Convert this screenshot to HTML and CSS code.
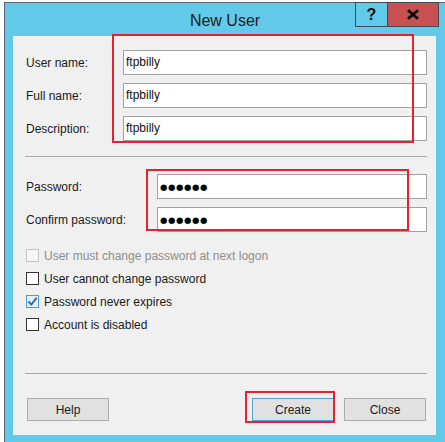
FILE: index.html
```html
<!DOCTYPE html>
<html>
<head>
<meta charset="utf-8">
<title>New User</title>
<link rel="stylesheet" href="styles.css">
</head>
<body>
<div class="window">
  <div class="titlebar">
    <span class="title">New User</span>
    <div class="caption">
      <div class="cap-btn cap-help">?</div>
      <div class="cap-btn cap-close">
        <svg width="14" height="11" viewBox="0 0 14 11"><path d="M2 1.2 L12 9.8 M12 1.2 L2 9.8" stroke="#000" stroke-width="2.8" fill="none"/></svg>
      </div>
    </div>
  </div>
  <div class="client">
    <div class="grid grid-top">
      <label class="lbl">User name:</label><div class="field">ftpbilly</div>
      <label class="lbl">Full name:</label><div class="field">ftpbilly</div>
      <label class="lbl">Description:</label><div class="field">ftpbilly</div>
    </div>
    <div class="sep sep-top"></div>
    <div class="grid grid-pw">
      <label class="lbl">Password:</label><div class="field"><span class="dots">●●●●●●</span></div>
      <label class="lbl">Confirm password:</label><div class="field"><span class="dots">●●●●●●</span></div>
    </div>
    <div class="checks">
      <div class="check disabled"><span class="box"></span><span>User must change password at next logon</span></div>
      <div class="check"><span class="box"></span><span>User cannot change password</span></div>
      <div class="check"><span class="box checked"><svg width="11" height="11" viewBox="0 0 11 11"><path d="M1.5 5.5 L4.3 8.5 L9.6 1.8" stroke="#2a6fb2" stroke-width="2" fill="none"/></svg></span><span>Password never expires</span></div>
      <div class="check"><span class="box"></span><span>Account is disabled</span></div>
    </div>
    <div class="sep sep-bottom"></div>
    <div class="buttons">
      <button class="btn btn-help">Help</button>
      <button class="btn btn-default">Create</button>
      <button class="btn">Close</button>
    </div>
  </div>
</div>
<div class="mark mark-names"></div>
<div class="mark mark-pw"></div>
<div class="mark mark-create"></div>
</body>
</html>
```

FILE: styles.css
```css
html, body {
  margin: 0;
  padding: 0;
}
body {
  background: #ffffff;
  width: 445px;
  height: 442px;
  overflow: hidden;
  position: relative;
  font-family: "Liberation Sans", Arial, sans-serif;
  font-size: 12px;
  color: #1a1a1a;
}
.window {
  margin: 2px 0 0 4px;
  width: 441px;
  height: 440px;
  box-sizing: border-box;
  border-top: 1px solid #5b6770;
  border-left: 1px solid #5b6770;
  background: #62c9e8;
  position: relative;
}
.titlebar {
  height: 33px;
  box-sizing: border-box;
  padding-top: 2px;
  line-height: 31px;
  text-align: center;
}
.title {
  font-size: 16px;
  color: #1b1b1b;
}
.caption {
  position: absolute;
  top: -1px;
  right: 6px;
  display: flex;
  height: 25px;
}
.cap-btn {
  box-sizing: border-box;
  height: 25px;
  border: 1px solid #3d4c57;
  display: flex;
  align-items: center;
  justify-content: center;
}
.cap-help {
  width: 32px;
  border-right: none;
  background: #62c9e8;
  font-weight: bold;
  font-size: 16px;
  color: #111;
  padding-bottom: 1px;
}
.cap-close {
  width: 52px;
  background: #c75050;
}
.client {
  margin-left: 8px;
  width: 423px;
  height: 399px;
  box-sizing: border-box;
  background: #f0f0f0;
  padding: 14px 9px 0 12px;
}
.grid {
  display: grid;
  row-gap: 8px;
}
.grid-top {
  grid-template-columns: 98px 304px;
}
.grid-pw {
  grid-template-columns: 132px 270px;
  margin-top: 17px;
}
.lbl {
  align-self: center;
  padding-left: 1px;
  color: #1a1a1a;
}
.field {
  height: 25px;
  box-sizing: border-box;
  border: 1px solid #a2a2a2;
  background: #ffffff;
  padding-left: 2px;
  line-height: 22px;
  color: #111;
}
.dots {
  font-family: "DejaVu Sans", sans-serif;
  font-size: 8.5px;
  letter-spacing: 0.6px;
  color: #000;
}
.sep {
  height: 1px;
  background: #a9a9a9;
}
.sep-top {
  margin-top: 15px;
}
.checks {
  margin-top: 12px;
}
.check {
  height: 23px;
  display: flex;
  align-items: center;
  gap: 5px;
  padding-left: 1px;
  color: #1a1a1a;
}
.box {
  width: 13px;
  height: 13px;
  box-sizing: border-box;
  border: 1px solid #333333;
  background: #ffffff;
  display: flex;
  align-items: center;
  justify-content: center;
}
.box.checked {
  border-color: #4d9bd6;
  background: #e3f1fb;
}
.check.disabled {
  color: #8d8d8d;
}
.check.disabled .box {
  border-color: #c6c6c6;
  background: #f6f6f6;
}
.sep-bottom {
  margin-top: 37px;
}
.buttons {
  margin-top: 24px;
  display: flex;
  gap: 10px;
  padding-right: 1px;
}
.btn {
  width: 82px;
  height: 23px;
  box-sizing: border-box;
  border: 1px solid #adadad;
  background: #e1e1e1;
  font-family: "Liberation Sans", Arial, sans-serif;
  font-size: 12px;
  color: #1a1a1a;
  padding: 0;
  margin: 0;
}
.btn-help {
  margin-left: 2px;
  margin-right: auto;
}
.btn-default {
  border-color: #4e9fdc;
}
.mark {
  position: absolute;
  border: 2px solid #e8222b;
  box-sizing: border-box;
}
.mark-names {
  left: 112px;
  top: 34px;
  width: 302px;
  height: 109px;
}
.mark-pw {
  left: 146px;
  top: 169px;
  width: 263px;
  height: 62px;
}
.mark-create {
  left: 245px;
  top: 391px;
  width: 90px;
  height: 32px;
}
```
